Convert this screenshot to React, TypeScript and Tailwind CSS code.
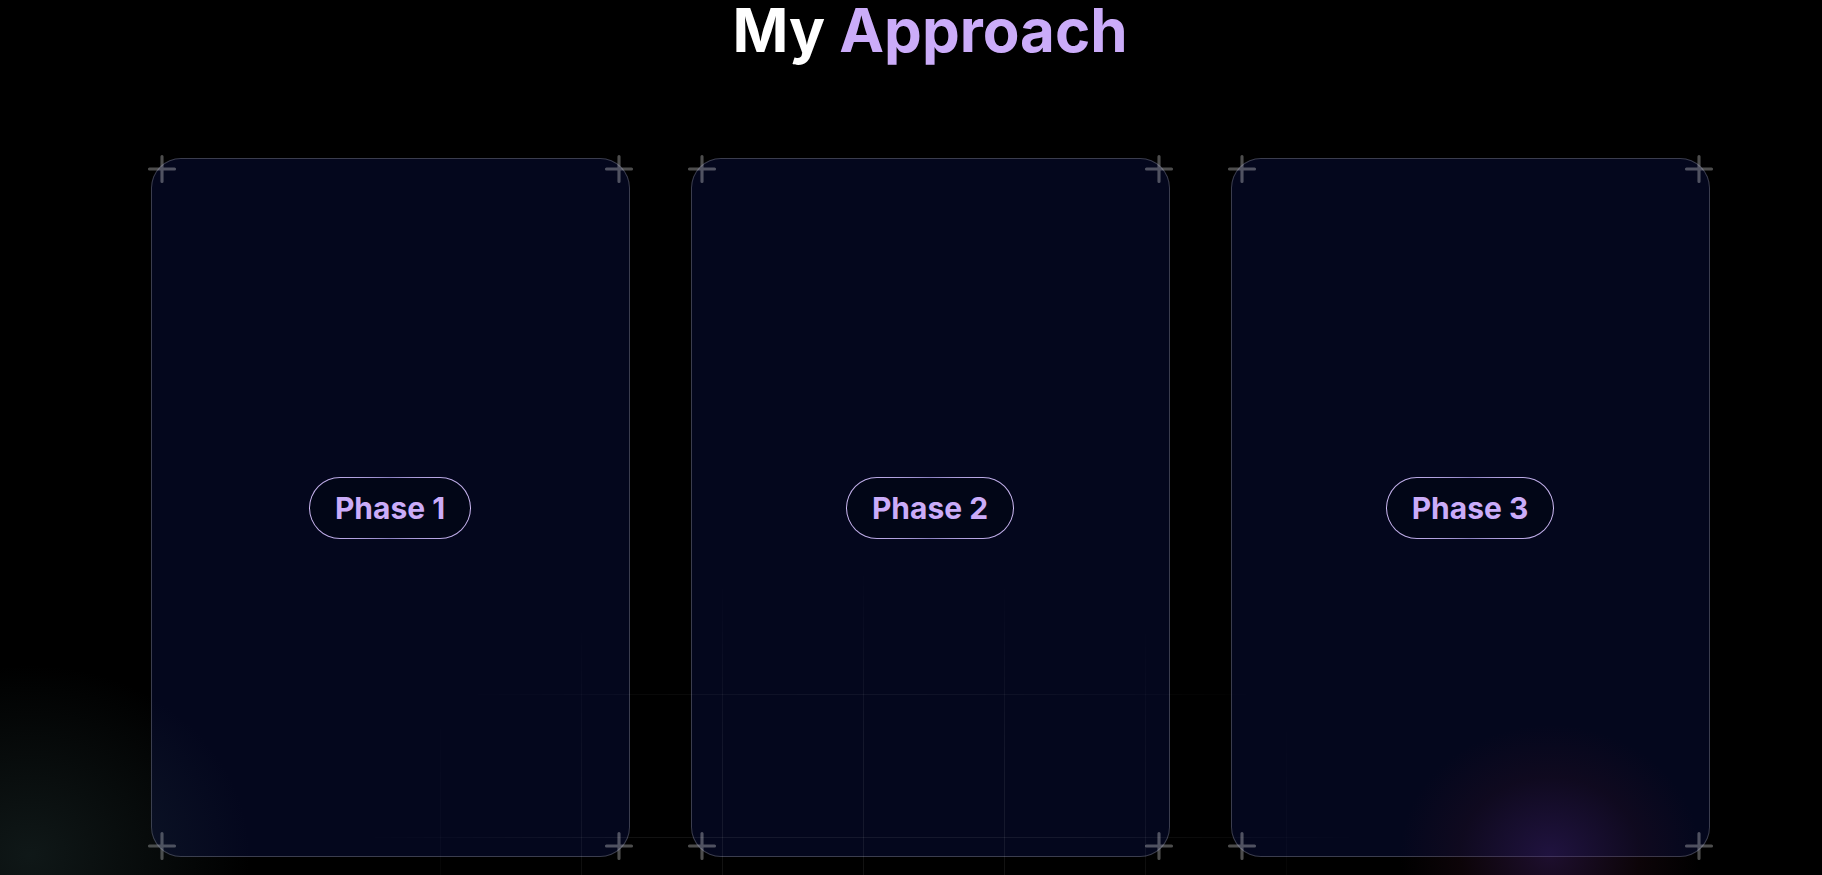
import React from "react";

const PlusIcon = ({ className }: { className: string }) => {
    return (
        <svg
            xmlns="http://www.w3.org/2000/svg"
            fill="none"
            viewBox="0 0 24 24"
            strokeWidth="1.5"
            stroke="currentColor"
            className={className}
        >
            <path strokeLinecap="round" strokeLinejoin="round" d="M12 6v12m6-6H6" />
        </svg>
    );
};

const PhaseButton = ({ order }: { order: string }) => {
    return (
        <button className="relative inline-flex overflow-hidden rounded-full p-[1px]">
            <span className="absolute inset-0 bg-[conic-gradient(from_0deg_at_50%_50%,#8a80c0_0%,#d2bdf8_25%,#8a80c0_50%,#d2bdf8_75%,#8a80c0_100%)]" />
            <span className="relative inline-flex h-full w-full items-center justify-center rounded-full bg-[#020617] px-[25px] py-[10px] text-[30px] leading-[40px] font-bold text-[#CBACF9]">
                {order}
            </span>
        </button>
    );
};

const Card = ({ order }: { order: string }) => {
    return (
        <div className="relative flex h-[699px] w-[479px] items-center justify-center rounded-[30px] border border-white/[0.22] bg-[#04071d]">
            <PlusIcon className="absolute -left-[15px] -top-[15px] h-[50px] w-[50px] text-white opacity-30" />
            <PlusIcon className="absolute -right-[15px] -top-[15px] h-[50px] w-[50px] text-white opacity-30" />
            <PlusIcon className="absolute -bottom-[15px] -left-[15px] h-[50px] w-[50px] text-white opacity-30" />
            <PlusIcon className="absolute -bottom-[15px] -right-[15px] h-[50px] w-[50px] text-white opacity-30" />
            <PhaseButton order={order} />
        </div>
    );
};

export default function App() {
    const phases = ["Phase 1", "Phase 2", "Phase 3"];

    return (
        <div className="relative h-[875px] w-full overflow-hidden bg-black font-['Inter',sans-serif]">
            <div className="relative pl-[38px]">
                <h1 className="text-center text-[60px] font-bold leading-[60px] text-white">
                    My <span className="text-[#CBACF9]">Approach</span>
                </h1>
                <div className="mt-[98px] flex justify-center gap-[61px]">
                    {phases.map((p) => (
                        <Card key={p} order={p} />
                    ))}
                </div>
            </div>

            {/* footer grid, faded */}
            <div className="pointer-events-none absolute inset-0 bg-[linear-gradient(to_right,rgba(255,255,255,0.07)_1px,transparent_1px),linear-gradient(to_bottom,rgba(255,255,255,0.07)_1px,transparent_1px)] bg-[size:141px_143px] bg-[position:17px_122px] [mask-image:radial-gradient(ellipse_520px_340px_at_862px_900px,black_45%,transparent_100%)]" />

            {/* glows */}
            <div className="pointer-events-none absolute -bottom-[170px] -left-[190px] h-[380px] w-[440px] bg-[radial-gradient(closest-side,rgba(55,85,85,0.28),transparent)]" />
            <div className="pointer-events-none absolute -bottom-[110px] left-[1400px] h-[260px] w-[300px] bg-[radial-gradient(closest-side,rgba(70,35,110,0.42),rgba(60,20,40,0.2)_60%,transparent)]" />
        </div>
    );
}
